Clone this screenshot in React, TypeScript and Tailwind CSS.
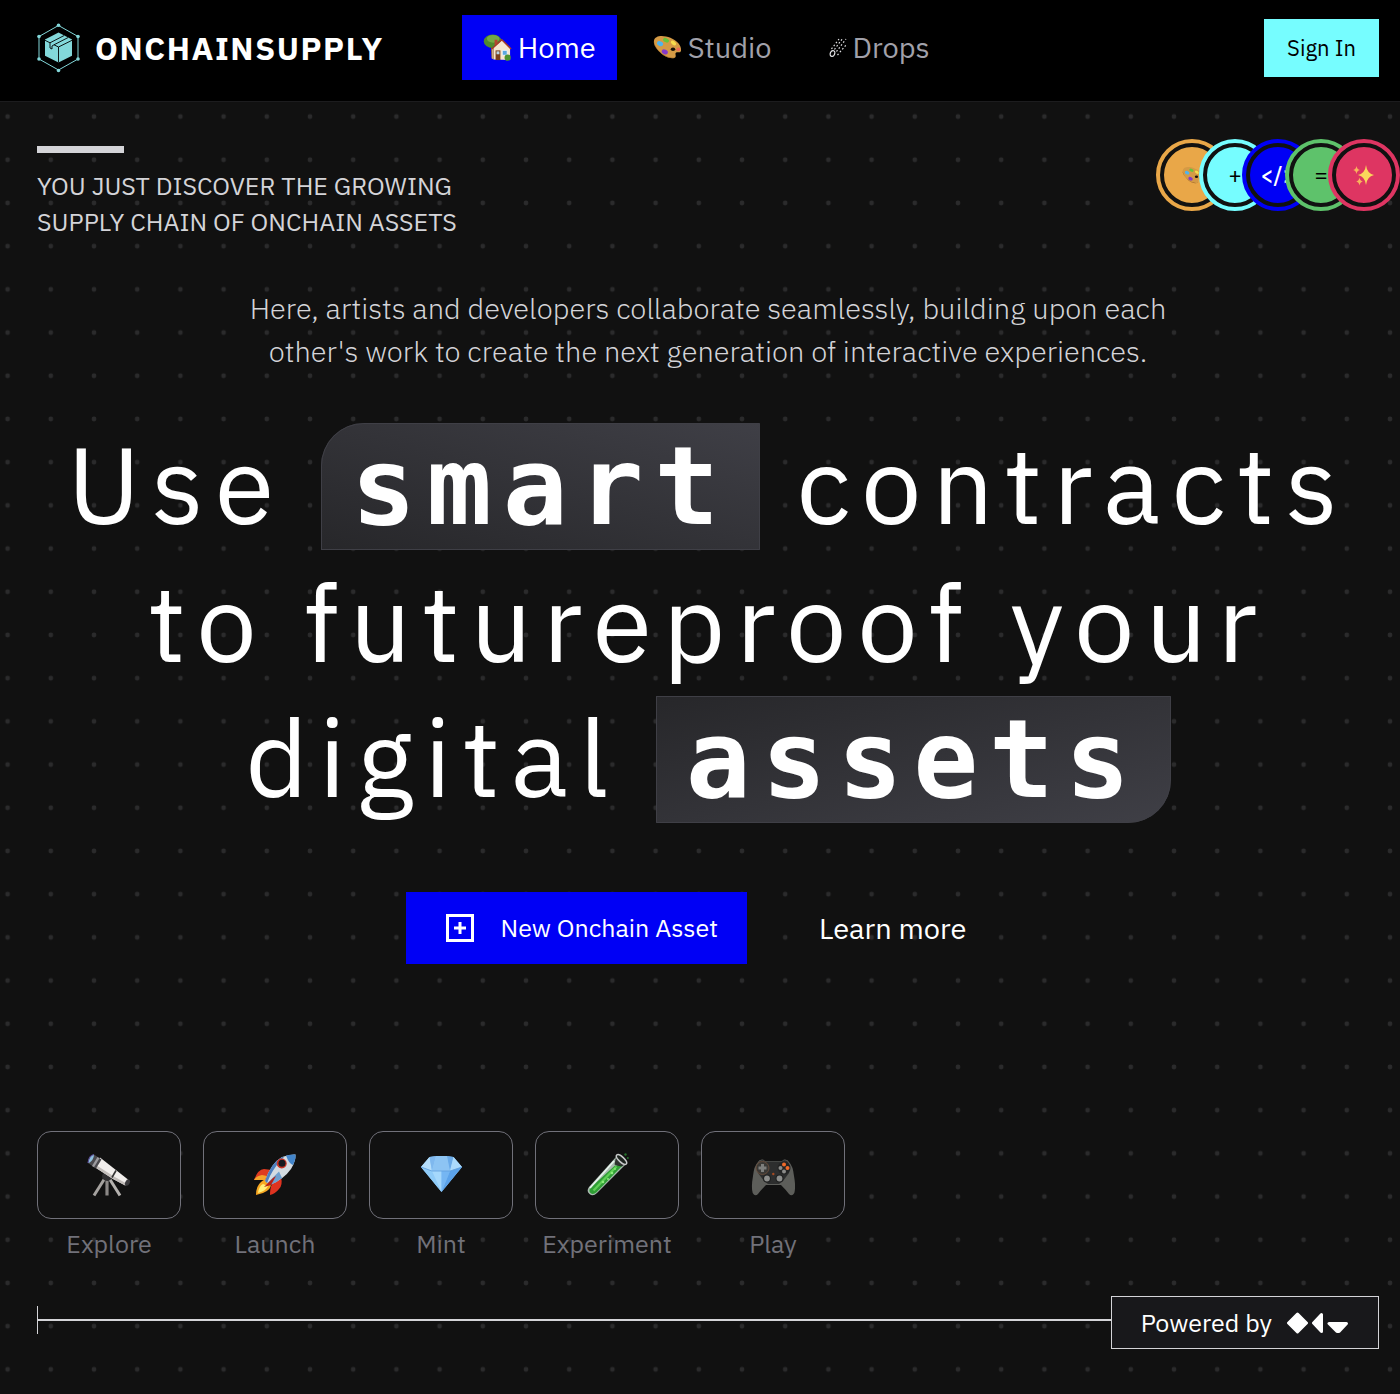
import type { ReactNode } from "react";

type IconProps = { className?: string };

function Logo() {
  return (
    <svg viewBox="0 0 43 50" className="h-[50px] w-[43px] shrink-0" aria-hidden="true">
      <path d="M21.500 2.500 41 13.500v22.500L21.500 47 2 36V13.500z" fill="none" stroke="#83d8da" strokeWidth="1" />
      <g fill="#83d8da">
        <circle cx="21.500" cy="2.200" r="1.800" />
        <circle cx="41" cy="13.500" r="1.800" />
        <circle cx="41" cy="36" r="1.800" />
        <circle cx="21.500" cy="47.500" r="1.800" />
        <circle cx="2" cy="36" r="1.800" />
        <circle cx="2" cy="13.500" r="1.800" />
        <path d="M21.500 9.500 35 16.500v16.300l-13.500 6.700L8 32.800V16.500z" />
      </g>
      <g fill="none" stroke="#000" strokeWidth="0.9">
        <path d="M8 17.300l5 2.500M17 21.800l4.500 2.200L35 17.300M21.500 24v15.500" />
        <path d="M13 19.800 27 12.600M13 19.800v5.200l2 1M17 21.800 31 14.600M17 21.800l-2 1.200v3" />
      </g>
    </svg>
  );
}

function House({ className }: IconProps) {
  return (
    <svg viewBox="0 0 30 30" className={className} aria-hidden="true">
      <path d="M8 13h4v13H9z" fill="#7b4a22" />
      <ellipse cx="10" cy="8.500" rx="9.200" ry="7" fill="#4f8a2c" />
      <ellipse cx="10.500" cy="6" rx="6.500" ry="4" fill="#74a944" />
      <path d="M11 15 19.500 7.500 28 15v13l-17-.5z" fill="#f6e6cf" />
      <path d="M11 15v12.500l-2-1V16z" fill="#c9a884" />
      <path d="M9 16.500 19.500 7 29 16.500" fill="none" stroke="#a33a2a" strokeWidth="1.600" strokeLinejoin="round" />
      <path d="M12 7h3v4l-3 2z" fill="#b5452f" />
      <path d="M13 18h5v10h-5z" fill="#7a3f1c" />
      <path d="M14 19h3v3h-3z" fill="#b9d8e8" />
      <path d="M20 18h5v5h-5z" fill="#5aa7e0" stroke="#fff" strokeWidth=".7" />
      <circle cx="25.500" cy="25.500" r="3.200" fill="#4d9430" />
    </svg>
  );
}

function Palette({ className }: IconProps) {
  return (
    <svg viewBox="0 0 30 30" className={className} aria-hidden="true">
      <path
        d="M1 8C2 2 11 2 18 5c7 3 11.500 8 11 13-.4 3-3.500 1.500-5 2.200-2 1.200 1 4-1.500 5.400-4 1.800-11-1.200-15-5.400C3.500 16.500.3 12 1 8z"
        fill="#d59a45"
      />
      <path d="M1 8.500c.5 6 7 13.500 14 16 4 1.200 7 1.300 7.800.8-5 2.200-12-1.500-15.300-5.100C3.500 16 .5 12 1 8.500z" fill="#9b6424" />
      <ellipse cx="20.700" cy="16.700" rx="2.300" ry="1.800" fill="#171008" />
      <ellipse cx="7.300" cy="11" rx="3.300" ry="2.400" fill="#4fb4ee" transform="rotate(25 7.300 11)" />
      <ellipse cx="13.500" cy="7.500" rx="3.200" ry="2.100" fill="#67c43c" transform="rotate(25 13.500 7.500)" />
      <ellipse cx="21.200" cy="10.300" rx="3.100" ry="1.900" fill="#f6dc4c" transform="rotate(35 21.200 10.300)" />
      <ellipse cx="26.200" cy="16.800" rx="2" ry="1.900" fill="#ef6a54" />
      <ellipse cx="12.200" cy="19.500" rx="3.300" ry="2.400" fill="#8438c8" transform="rotate(25 12.200 19.500)" />
    </svg>
  );
}

function Comet({ className }: IconProps) {
  return (
    <svg viewBox="0 0 18 22" className={className} aria-hidden="true">
      <g fill="none" stroke="#e4e4e7" strokeWidth="1.200">
        <ellipse cx="3.500" cy="16.500" rx="2.200" ry="3" transform="rotate(25 3.500 16.500)" />
        <path d="M2.500 12 10 2M5.500 12.500 13.500 1.500M7.500 14.500 17 2M8.500 18 17 8" strokeDasharray="1.600 2.100" />
      </g>
    </svg>
  );
}

function Sparkles({ className }: IconProps) {
  return (
    <svg viewBox="0 0 22 22" className={className} aria-hidden="true">
      <path d="M13 1q1 8.500 8 10-7 1.500-8 10-1-8.500-8-10 7-1.500 8-10z" fill="#fbd75b" />
      <path d="M3.500 2q.6 3.400 3.300 4-2.700.6-3.300 4Q2.900 6.600.2 6 2.900 5.400 3.500 2zM6.500 13.500q.6 3.400 3.300 4-2.700.6-3.300 4-.6-3.400-3.300-4 2.700-.6 3.300-4z" fill="#f9b45c" />
    </svg>
  );
}

function Telescope({ className }: IconProps) {
  return (
    <svg viewBox="0 0 44 44" className={className} aria-hidden="true">
      <path d="M18 25 7 42.500" stroke="#a5a29f" strokeWidth="3" />
      <path d="M22 25 33 42.500" stroke="#b5b2af" strokeWidth="3" />
      <path d="M20 24v18.500" stroke="#8b8886" strokeWidth="3.200" />
      <path d="M15 24q0-5 6-6l5 4q-1 5-5 6-5 0-6-4z" fill="#2f2e30" />
      <path d="M13 4.500 41 26.500 38.500 32.500 26 26 7.500 14z" fill="#f1eeec" />
      <path d="M9 12 7.500 14 26 26l12 6.500 1-2.200L27 23.500z" fill="#c2bdba" />
      <path d="m7 1.500 7.500 5L9 15.500 1 10z" fill="#4a494d" />
      <path d="m10.500 4 2 1.300-5.500 9-2-1.300z" fill="#9b9a9e" />
      <path d="M1 10C1.500 5 4 2 7 1.500 7 5 4.500 9.500 1 10z" fill="#8fc0df" />
      <path d="M1 10C1.500 5 4 2 7 1.500" fill="none" stroke="#5a4b93" strokeWidth="1.200" />
      <path d="m29 17.500-4 7" stroke="#333" strokeWidth="1.600" />
      <ellipse cx="40.500" cy="29.600" rx="2.200" ry="3.400" fill="#3a393c" transform="rotate(30 40.500 29.600)" />
    </svg>
  );
}

function Rocket({ className }: IconProps) {
  return (
    <svg viewBox="0 0 44 44" className={className} aria-hidden="true">
      <path d="M1 27q4-11 10-11l8 1-6 10z" fill="#df3b20" />
      <path d="M1 27q2-4 8-5l5 1-2 4z" fill="#f5a52c" />
      <path d="M17 42q0-7 2-11l9-7q2 8-2 12-4 5-9 6z" fill="#df3320" />
      <path d="M3 42q0-9 5-13 3-3 6-2l4 4q0 6-8 9z" fill="#f7a722" />
      <path d="M5 40q1-7 5-9l5 2q-2 5-10 7z" fill="#fff07a" />
      <path d="M12 28Q18 10 29 4q8-3 13.500-2.500Q43 8 38 16 31 26 17 32z" fill="#d4dbe1" />
      <path d="M12 28Q18 10 29 4l2 0Q22 13 17 23l-3 7z" fill="#4c7fc0" />
      <path d="M33 2.500q6-1.500 9.500-1Q43 6 40 12q-4-1-7-9.500z" fill="#4385ca" />
      <path d="M17 32 14.500 30 26 18.500l3 6.500q-5 4.500-12 7z" fill="#6d9fcf" />
      <path d="m11 34 9-9 3-2-5 9z" fill="#b92018" />
      <circle cx="28.700" cy="10.500" r="5" fill="#c93425" />
      <circle cx="29" cy="10.300" r="3.500" fill="#17191f" />
    </svg>
  );
}

function Gem({ className }: IconProps) {
  return (
    <svg viewBox="0 0 44 44" className={className} aria-hidden="true">
      <path d="M10.500 4q12-2 24 0L43 14 22.500 39 2 14z" fill="#8fcbf8" />
      <path d="M10.500 4 2 14l11 4z" fill="#b5defb" />
      <path d="M10.500 4 13 18l4-15z" fill="#7fb8ee" />
      <path d="M17 3 13 18h18L28 3z" fill="#8dc4f3" />
      <path d="m28 3 3 15 3.500-14z" fill="#6aaae8" />
      <path d="M34.500 4 31 18l12-4z" fill="#abdafc" />
      <path d="m2 14 11 4 9.500 21z" fill="#8fcbf8" />
      <path d="M13 18h9.500v21z" fill="#a5d8fc" />
      <path d="M22.500 18H31l-8.500 21z" fill="#75b6f3" />
      <path d="m43 14-12 4-8.500 21z" fill="#5ba2ea" />
      <path d="m2 14 11 4h18l12-4" fill="none" stroke="#5f9fdd" strokeWidth=".8" />
    </svg>
  );
}

function TestTube({ className }: IconProps) {
  return (
    <svg viewBox="0 0 44 44" className={className} aria-hidden="true">
      <path d="M31 4 41 11 12 40q-4 4-7.500 1-3.500-3-.5-7z" fill="#a9bcb0" />
      <path d="M30 12.500h7.500L11.500 39.300q-3.300 3-6 .8-2.300-2.300.2-5.600z" fill="#2f9e35" />
      <path d="M31.500 13.500 8.500 37.500" stroke="#5fcf55" strokeWidth="2.300" />
      <path d="M29 8 5 35" stroke="#e9f4ee" strokeWidth="1.600" />
      <path d="m31 4 9 7-3 2.500q-5-.500-7.500-2z" fill="#171b18" opacity=".85" />
      <ellipse cx="36.500" cy="6.500" rx="6.500" ry="2.600" fill="#1c231e" stroke="#c8caca" strokeWidth="1.500" transform="rotate(43 36.500 6.500)" />
      <circle cx="40.500" cy="1.500" r="1.200" fill="#24722a" />
      <circle cx="42.800" cy="5" r="1" fill="#24722a" />
      <g fill="#8bea7b">
        <circle cx="27" cy="20" r="1.300" />
        <circle cx="23" cy="26" r="1" />
        <circle cx="18" cy="29" r="1.300" />
        <circle cx="30" cy="16" r=".9" />
      </g>
    </svg>
  );
}

function Gamepad({ className }: IconProps) {
  return (
    <svg viewBox="0 0 44 44" className={className} aria-hidden="true">
      <path
        d="M7 9q1-3 5-2.500L14 8h17l2-1.500q4-.5 5 2.500 4 4 5 14 2 11 .3 17-2.300 4-5.300 1-3-4-8-9H15q-5 5-8 9-3 3-5.300-1-1.700-6 .3-17Q3 13 7 9z"
        fill="#5d5e5a"
      />
      <path d="M8 9q1-2 4-1.800L14 8.500h17l2-1.300q3-.2 4 1.800 3 5 1 11-3 4-6 8l-4 3H17l-4-3-6-8Q5 14 8 9z" fill="#2d2e2e" />
      <circle cx="11.500" cy="15" r="6.500" fill="#3a3936" stroke="#70503c" strokeWidth=".8" />
      <path d="M10 11h3v2.500h2.500v3H13V19h-3v-2.500H7.500v-3H10z" fill="#7d7e7c" />
      <circle cx="33" cy="15" r="6.500" fill="#232424" />
      <circle cx="33" cy="11.500" r="2" fill="#f06a2a" />
      <circle cx="36.500" cy="15" r="2" fill="#f06a2a" />
      <circle cx="29.500" cy="15" r="2" fill="#8b8b89" />
      <circle cx="33" cy="18.500" r="2" fill="#8b8b89" />
      <circle cx="16" cy="25.500" r="4" fill="#202121" />
      <circle cx="16" cy="25.500" r="2.900" fill="#8d8e8c" />
      <circle cx="28.500" cy="25.500" r="4" fill="#202121" />
      <circle cx="28.500" cy="25.500" r="2.900" fill="#8d8e8c" />
      <circle cx="22.300" cy="21" r="1.200" fill="#a44a22" />
    </svg>
  );
}

function DotGrid() {
  return (
    <svg className="pointer-events-none absolute inset-0 h-full w-full" aria-hidden="true">
      <defs>
        <pattern id="dots" width="24" height="24" patternUnits="userSpaceOnUse" patternTransform="translate(-14 -7) scale(1.8)">
          <circle cx="12" cy="12" r="1.300" fill="#2b2b2c" />
        </pattern>
      </defs>
      <rect width="100%" height="100%" fill="url(#dots)" />
    </svg>
  );
}

const badges: { key: string; ring: string; content: ReactNode }[] = [
  { key: "art", ring: "border-[#e9a748] bg-[#e9a748]", content: <Palette className="size-[21px]" /> },
  { key: "plus", ring: "border-[#76fdff] bg-[#76fdff]", content: "+" },
  { key: "code", ring: "border-[#0000f5] bg-[#0000f5]", content: "</>" },
  { key: "equals", ring: "border-[#5ec26b] bg-[#5ec26b]", content: "=" },
  { key: "magic", ring: "border-[#de3562] bg-[#de3562]", content: <Sparkles className="size-[22px]" /> },
];

const actions = [
  { label: "Explore", Icon: Telescope },
  { label: "Launch", Icon: Rocket },
  { label: "Mint", Icon: Gem },
  { label: "Experiment", Icon: TestTube },
  { label: "Play", Icon: Gamepad },
];

const navLink = "flex items-center gap-[6px] px-[21px] py-[11px] text-[29px] leading-[43px]";

function Header() {
  return (
    <header className="relative flex items-center border-b border-[#1c1c1e] bg-black pt-[15px] pr-[21px] pb-[21px] pl-[37px]">
      <a href="#" className="flex items-center gap-[15px]">
        <Logo />
        <span className="text-[32px] leading-10 font-bold tracking-wider text-white">ONCHAINSUPPLY</span>
      </a>
      <nav className="ml-[78px] flex gap-[15px] text-[#a1a1aa]">
        <a href="#" className={navLink + " bg-[#0000f5] text-white"}>
          <House className="size-[29px]" />
          Home
        </a>
        <a href="#" className={navLink}>
          <Palette className="size-[29px]" />
          Studio
        </a>
        <a href="#" className={navLink}>
          <Comet className="h-[22px] w-[18px]" />
          Drops
        </a>
      </nav>
      <button type="button" className="ml-auto bg-[#76fdff] px-[23px] py-[11px] text-[22px] leading-9 text-black">
        Sign In
      </button>
    </header>
  );
}

export default function App() {
  return (
    <div className="flex min-h-screen flex-col overflow-hidden bg-[#111111] font-['IBM_Plex_Sans',Roboto,sans-serif] text-white">
      <Header />
      <main className="relative flex-1">
        <DotGrid />
        <div className="relative pt-[37px] pr-[21px] pb-[45px] pl-[37px]">
          <div className="flex items-start justify-between">
            <div className="pt-[7px]">
              <div className="h-[7px] w-[87px] bg-[#d4d4d8]" />
              <p className="mt-[15px] text-[25px] leading-9 text-[#d4d4d8] uppercase">
                You just discover the growing
                <br />
                supply chain of onchain assets
              </p>
            </div>
            <ul className="-mr-[21px] flex -space-x-[29px]">
              {badges.map((b) => (
                <li key={b.key} className={"size-[72px] rounded-full border-4 " + b.ring}>
                  <div className="flex size-full items-center justify-center overflow-hidden rounded-full border-4 border-[#111111] text-[22px] leading-7">
                    <span className={b.key === "code" ? "font-medium text-white" : "text-black"}>{b.content}</span>
                  </div>
                </li>
              ))}
            </ul>
          </div>

          <p className="mx-auto mt-[47px] max-w-[922px] text-center text-[29px] leading-[43px] font-light text-[#d4d4d8]">
            Here, artists and developers collaborate seamlessly, building upon each other's work to create the next
            generation of interactive experiences.
          </p>

          <h1 className="mt-[43px] text-center text-[108px] leading-[135px] font-normal tracking-widest">
            Use{" "}
            <span className="rounded-tl-[43px] border border-[#3f3f46] bg-linear-to-tr from-[#27272a] to-[#3f3f46] px-[29px] font-['DejaVu_Sans_Mono',monospace] font-bold">
              smart
            </span>{" "}
            contracts
            <br />
            to futureproof your
            <br />
            digital{" "}
            <span className="rounded-br-[43px] border border-[#3f3f46] bg-linear-to-br from-[#27272a] to-[#3f3f46] px-[29px] font-['DejaVu_Sans_Mono',monospace] font-bold">
              assets
            </span>
          </h1>

          <div className="mt-[65px] flex flex-wrap items-center justify-center gap-[29px]">
            <button
              type="button"
              className="flex items-center gap-[26px] bg-[#0000f5] py-[18px] pr-[29px] pl-10 text-[25px] leading-9"
            >
              <svg viewBox="0 0 28 28" className="size-[28px]" fill="none" stroke="#fff" strokeWidth="3" aria-hidden="true">
                <path d="M1.500 1.500h25v25h-25zM14 8v12M8 14h12" />
              </svg>
              New Onchain Asset
            </button>
            <a href="#" className="px-[43px] text-[29px] leading-[43px]">
              Learn more
            </a>
          </div>

          <ul className="mt-[167px] flex flex-wrap gap-[22px]">
            {actions.map(({ label, Icon }) => (
              <li key={label}>
                <button type="button" className="flex flex-col items-center gap-[7px] text-[25px] leading-9 text-[#71717a]">
                  <span className="flex h-[88px] w-[144px] items-center justify-center rounded-[14px] border border-[#71717a] bg-[#111111]">
                    <Icon className="size-[44px]" />
                  </span>
                  {label}
                </button>
              </li>
            ))}
          </ul>

          <footer className="mt-[34px] flex items-center">
            <div className="mb-[6px] flex flex-1 items-center">
              <div className="h-7 w-px bg-[#d4d4d8]" />
              <div className="h-0.5 flex-1 bg-[#d4d4d8]" />
            </div>
            <a
              href="#"
              className="flex h-[53px] items-center gap-[14px] border border-[#d4d4d8] bg-[#18181b] px-[29px] text-[25px] leading-9"
            >
              Powered by
              <svg viewBox="0 0 63 22" className="h-[22px] w-[63px]" fill="#fff" stroke="#fff" strokeWidth="3" strokeLinejoin="round" aria-hidden="true">
                <path d="M11.500 2 20.500 11 11.500 20 2.500 11zM35.500 2.500v17L27.500 11zM43 11.500h17.500L53 19.500h-2z" />
              </svg>
            </a>
          </footer>
        </div>
      </main>
    </div>
  );
}
